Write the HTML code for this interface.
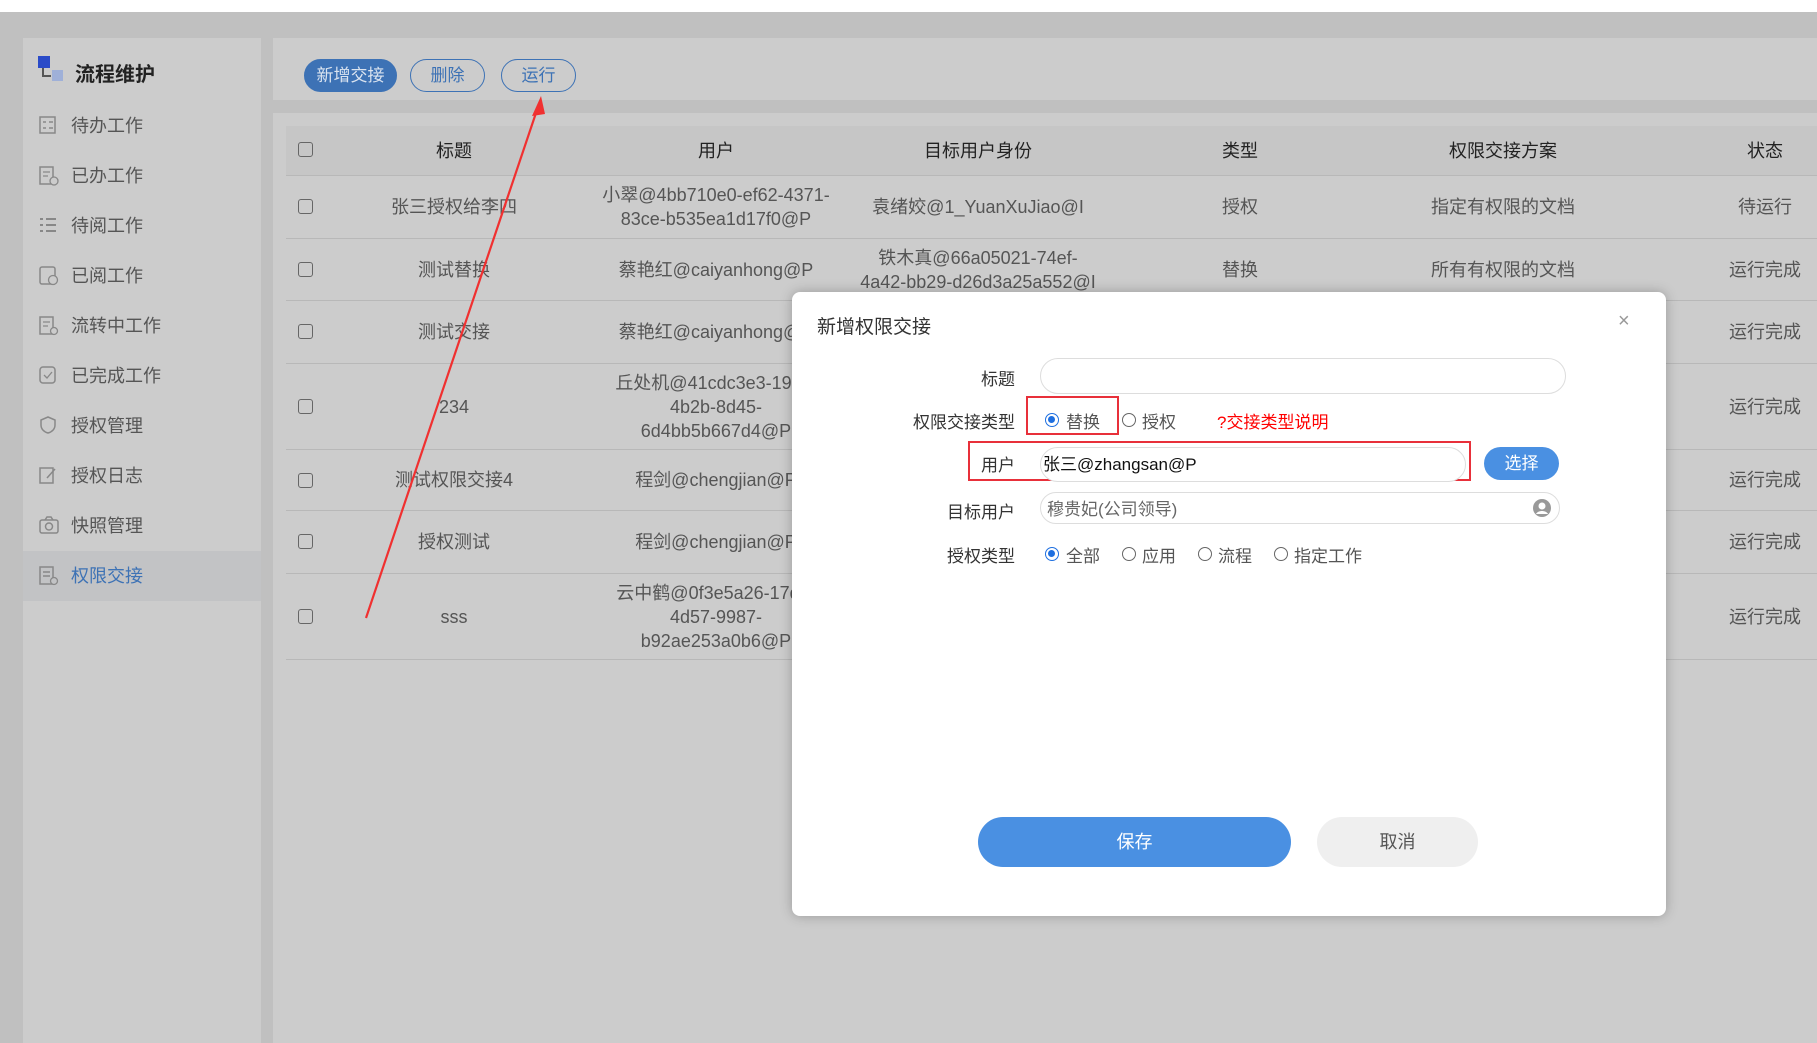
<!DOCTYPE html>
<html><head><meta charset="utf-8">
<style>
*{margin:0;padding:0;box-sizing:border-box}
body{width:1817px;height:1043px;overflow:hidden;background:#c0c0c0;font-family:"Liberation Sans","Noto Sans CJK SC",sans-serif;position:relative;color:#555}
.a{position:absolute}
.top{left:0;top:0;width:1817px;height:12px;background:#fff}
.side{left:23px;top:38px;width:238px;height:1005px;background:#cccccc}
.mi{position:absolute;left:0;width:238px;height:50px;font-size:18px;color:#555;line-height:50px;padding-left:48px}
.mi svg{position:absolute;left:16px;top:15px}
.main{left:273px;top:38px;width:1544px;height:62px;background:#cccccc}
.content{left:273px;top:113px;width:1544px;height:930px;background:#cccccc}
.btn{position:absolute;height:33px;border-radius:17px;font-size:17px;line-height:31px;text-align:center;border:1.5px solid #3d72b5;color:#3d72b5}
.hdr{left:286px;top:126px;width:1531px;height:50px;background:#c6c6c6;border-bottom:1px solid #b8b8b8}
.row{position:absolute;left:286px;width:1531px;border-bottom:1px solid #b8b8b8}
.c{position:absolute;top:0;height:100%;display:flex;align-items:center;justify-content:center;text-align:center;font-size:18px;line-height:24px}
.cb{position:absolute;left:12px;width:15px;height:15px;border:1.5px solid #666;border-radius:3px}
.modal{left:792px;top:292px;width:874px;height:624px;background:#fff;border-radius:8px;box-shadow:0 0 12px rgba(0,0,0,.25)}
.lbl{position:absolute;font-size:17px;color:#333;text-align:right;width:200px}
.inp{position:absolute;border:1px solid #ddd;border-radius:18px;background:#fff}
.rad{position:absolute;width:14px;height:14px;border:1.3px solid #666;border-radius:50%}
.rad.on{border:1.5px solid #1e6fe0}
.rad.on::after{content:"";position:absolute;left:2px;top:2px;width:7px;height:7px;border-radius:50%;background:#1e6fe0}
.rt{position:absolute;font-size:17px;color:#555}
</style></head><body>
<div class="a top"></div>
<div class="a side">
 <svg class="a" style="left:15px;top:18px" width="26" height="26"><rect x="0" y="0" width="12" height="12" fill="#2a4bc8"/><path d="M5 12v8h8" stroke="#555" stroke-width="2" fill="none"/><rect x="14" y="14" width="11" height="11" fill="#9fb0d8"/></svg>
 <div class="a" style="left:52px;top:20px;font-size:20px;font-weight:bold;color:#222">流程维护</div>
 <div class="mi" style="top:63px"><svg width="18" height="18"><rect x="1" y="1" width="15" height="16" fill="none" stroke="#888" stroke-width="1.5"/><path d="M4 6h3M10 6h4M4 12h3M10 12h4" stroke="#888" stroke-width="1.5"/></svg>待办工作</div>
 <div class="mi" style="top:113px"><svg width="20" height="20"><rect x="1" y="1" width="13" height="17" fill="none" stroke="#888" stroke-width="1.5"/><path d="M4 6h7M4 10h5" stroke="#888" stroke-width="1.3"/><circle cx="15" cy="15" r="4" fill="#ccc" stroke="#888" stroke-width="1.3"/></svg>已办工作</div>
 <div class="mi" style="top:163px"><svg width="18" height="18"><path d="M1 3h3M1 9h3M1 15h3M7 3h10M7 9h10M7 15h10" stroke="#888" stroke-width="2"/></svg>待阅工作</div>
 <div class="mi" style="top:213px"><svg width="20" height="20"><rect x="1" y="1" width="15" height="17" rx="2" fill="none" stroke="#888" stroke-width="1.5"/><circle cx="14" cy="14" r="4.5" fill="#ccc" stroke="#888" stroke-width="1.3"/></svg>已阅工作</div>
 <div class="mi" style="top:263px"><svg width="20" height="20"><rect x="1" y="1" width="13" height="17" fill="none" stroke="#888" stroke-width="1.5"/><path d="M4 6h7M4 10h5" stroke="#888" stroke-width="1.3"/><circle cx="15" cy="15" r="3.5" fill="#ccc" stroke="#888" stroke-width="1.3"/></svg>流转中工作</div>
 <div class="mi" style="top:313px"><svg width="18" height="18"><rect x="1" y="1" width="15" height="16" rx="3" fill="none" stroke="#888" stroke-width="1.5"/><path d="M5 9l3 3 5-6" stroke="#888" stroke-width="1.3" fill="none"/></svg>已完成工作</div>
 <div class="mi" style="top:363px"><svg width="18" height="18"><path d="M9 1l7 3v5c0 4-3 7-7 8-4-1-7-4-7-8V4z" fill="none" stroke="#888" stroke-width="1.5"/></svg>授权管理</div>
 <div class="mi" style="top:413px"><svg width="18" height="18"><rect x="1" y="2" width="13" height="15" fill="none" stroke="#888" stroke-width="1.5"/><path d="M8 12l8-9" stroke="#888" stroke-width="1.5"/></svg>授权日志</div>
 <div class="mi" style="top:463px"><svg width="20" height="18"><rect x="1" y="4" width="18" height="13" rx="2" fill="none" stroke="#888" stroke-width="1.5"/><circle cx="10" cy="10.5" r="3.5" fill="none" stroke="#888" stroke-width="1.5"/><path d="M6 4l2-3h4l2 3" stroke="#888" stroke-width="1.5" fill="none"/></svg>快照管理</div>
 <div class="mi" style="top:513px;background:#c2c3c5;color:#3d72b5"><svg width="20" height="20"><rect x="1" y="1" width="13" height="17" fill="none" stroke="#888" stroke-width="1.5"/><path d="M4 6h7M4 10h7" stroke="#888" stroke-width="1.5"/><circle cx="15" cy="15" r="3.5" fill="#c2c3c5" stroke="#888" stroke-width="1.3"/></svg>权限交接</div>
</div>
<div class="a main">
 <div class="btn" style="left:31px;top:21px;width:93px;background:#3d72b5;color:#dbe4f0">新增交接</div>
 <div class="btn" style="left:137px;top:21px;width:75px">删除</div>
 <div class="btn" style="left:228px;top:21px;width:75px">运行</div>
</div>
<div class="a content"></div>
<div class="a hdr">
 <div class="cb" style="top:16px"></div>
 <div class="c" style="left:53px;width:230px;color:#222">标题</div>
 <div class="c" style="left:300px;width:260px;color:#222">用户</div>
 <div class="c" style="left:562px;width:260px;color:#222">目标用户身份</div>
 <div class="c" style="left:864px;width:180px;color:#222">类型</div>
 <div class="c" style="left:1087px;width:260px;color:#222">权限交接方案</div>
 <div class="c" style="left:1414px;width:130px;color:#222">状态</div>
</div>
<div class="row" style="top:176px;height:63px"><div class="cb" style="top:23px"></div>
 <div class="c" style="left:53px;width:230px">张三授权给李四</div>
 <div class="c" style="left:300px;width:260px">小翠@4bb710e0-ef62-4371-<br>83ce-b535ea1d17f0@P</div>
 <div class="c" style="left:562px;width:260px">袁绪姣@1_YuanXuJiao@I</div>
 <div class="c" style="left:864px;width:180px">授权</div>
 <div class="c" style="left:1087px;width:260px">指定有权限的文档</div>
 <div class="c" style="left:1414px;width:130px">待运行</div></div>
<div class="row" style="top:239px;height:62px"><div class="cb" style="top:23px"></div>
 <div class="c" style="left:53px;width:230px">测试替换</div>
 <div class="c" style="left:300px;width:260px">蔡艳红@caiyanhong@P</div>
 <div class="c" style="left:562px;width:260px">铁木真@66a05021-74ef-<br>4a42-bb29-d26d3a25a552@I</div>
 <div class="c" style="left:864px;width:180px">替换</div>
 <div class="c" style="left:1087px;width:260px">所有有权限的文档</div>
 <div class="c" style="left:1414px;width:130px">运行完成</div></div>
<div class="row" style="top:301px;height:63px"><div class="cb" style="top:23px"></div>
 <div class="c" style="left:53px;width:230px">测试交接</div>
 <div class="c" style="left:300px;width:260px">蔡艳红@caiyanhong@P</div>
 <div class="c" style="left:1414px;width:130px">运行完成</div></div>
<div class="row" style="top:364px;height:86px"><div class="cb" style="top:35px"></div>
 <div class="c" style="left:53px;width:230px">234</div>
 <div class="c" style="left:300px;width:260px">丘处机@41cdc3e3-19c8-<br>4b2b-8d45-<br>6d4bb5b667d4@P</div>
 <div class="c" style="left:1414px;width:130px">运行完成</div></div>
<div class="row" style="top:450px;height:61px"><div class="cb" style="top:23px"></div>
 <div class="c" style="left:53px;width:230px">测试权限交接4</div>
 <div class="c" style="left:300px;width:260px">程剑@chengjian@P</div>
 <div class="c" style="left:1414px;width:130px">运行完成</div></div>
<div class="row" style="top:511px;height:63px"><div class="cb" style="top:23px"></div>
 <div class="c" style="left:53px;width:230px">授权测试</div>
 <div class="c" style="left:300px;width:260px">程剑@chengjian@P</div>
 <div class="c" style="left:1414px;width:130px">运行完成</div></div>
<div class="row" style="top:574px;height:86px"><div class="cb" style="top:35px"></div>
 <div class="c" style="left:53px;width:230px">sss</div>
 <div class="c" style="left:300px;width:260px">云中鹤@0f3e5a26-17d2-<br>4d57-9987-<br>b92ae253a0b6@P</div>
 <div class="c" style="left:1414px;width:130px">运行完成</div></div>
<svg class="a" style="left:0;top:0" width="800" height="700"><path d="M366 618L539 104" stroke="#f03030" stroke-width="2.2"/><path d="M541 96L532 116L545 114Z" fill="#f03030"/></svg>
<div class="a modal">
 <div class="a" style="left:25px;top:20px;font-size:19px;color:#333">新增权限交接</div>
 <div class="a" style="left:826px;top:18px;font-size:20px;color:#999">×</div>
 <div class="lbl" style="left:23px;top:73px">标题</div>
 <div class="inp" style="left:248px;top:66px;width:526px;height:36px"></div>
 <div class="lbl" style="left:23px;top:116px">权限交接类型</div>
 <div class="a" style="left:234px;top:104px;width:93px;height:39px;border:2px solid #e8303a"></div>
 <div class="rad on" style="left:253px;top:121px"></div><div class="rt" style="left:274px;top:116px">替换</div>
 <div class="rad" style="left:330px;top:121px"></div><div class="rt" style="left:350px;top:116px">授权</div>
 <div class="rt" style="left:425px;top:116px;color:#f00">?交接类型说明</div>
 <div class="a" style="left:176px;top:149px;width:503px;height:40px;border:2px solid #e8303a"></div>
 <div class="lbl" style="left:23px;top:159px">用户</div>
 <div class="inp" style="left:248px;top:155px;width:426px;height:35px"></div>
 <div class="a" style="left:251px;top:158px;font-size:17px;color:#111">张三@zhangsan@P</div>
 <div class="a" style="left:692px;top:155px;width:75px;height:33px;border-radius:17px;background:#4a90e2;color:#fff;font-size:17px;line-height:33px;text-align:center">选择</div>
 <div class="lbl" style="left:23px;top:206px">目标用户</div>
 <div class="inp" style="left:248px;top:200px;width:520px;height:32px"></div>
 <div class="a" style="left:255px;top:203px;font-size:17px;color:#666">穆贵妃(公司领导)</div>
 <svg class="a" style="left:740px;top:206px" width="20" height="20"><circle cx="10" cy="10" r="9" fill="#999"/><circle cx="10" cy="8" r="3.5" fill="#fff"/><path d="M4 16c2-4 10-4 12 0" fill="#fff"/></svg>
 <div class="lbl" style="left:23px;top:250px">授权类型</div>
 <div class="rad on" style="left:253px;top:255px"></div><div class="rt" style="left:274px;top:250px">全部</div>
 <div class="rad" style="left:330px;top:255px"></div><div class="rt" style="left:350px;top:250px">应用</div>
 <div class="rad" style="left:406px;top:255px"></div><div class="rt" style="left:426px;top:250px">流程</div>
 <div class="rad" style="left:482px;top:255px"></div><div class="rt" style="left:502px;top:250px">指定工作</div>
 <div class="a" style="left:186px;top:525px;width:313px;height:50px;border-radius:25px;background:#4a90e2;color:#fff;font-size:18px;line-height:50px;text-align:center">保存</div>
 <div class="a" style="left:525px;top:525px;width:161px;height:50px;border-radius:25px;background:#efefef;color:#555;font-size:18px;line-height:50px;text-align:center">取消</div>
</div>
</body></html>
